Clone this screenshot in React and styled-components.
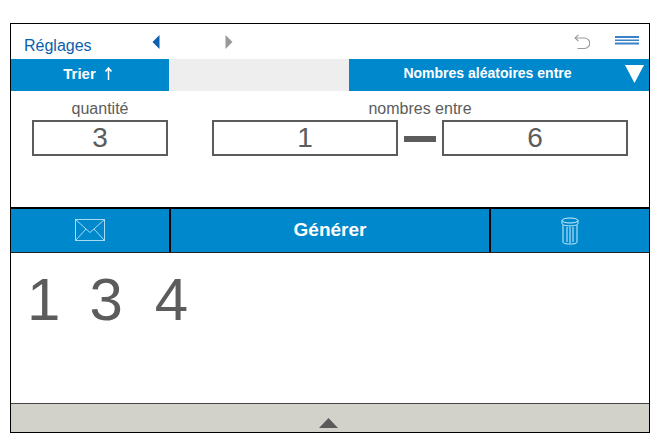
import React from "react";
import styled, { createGlobalStyle } from "styled-components";

const Global = createGlobalStyle`
  html, body { margin: 0; padding: 0; background: #fff; }
  body { font-family: "Liberation Sans", Arial, sans-serif; }
`;
const Page = styled.div`
  width: 664px; height: 443px; box-sizing: border-box; padding: 23px 14px 10px 10px;
`;
const Frame = styled.div`
  width: 640px; height: 410px; box-sizing: border-box; border: 1px solid #000;
  display: flex; flex-direction: column; background: #fff;
`;
const TopBar = styled.div`
  height: 35px; display: grid; grid-template-columns: 141px 73px 1fr 16px 59px; align-items: start;
`;
const SettingsLink = styled.div`
  color: #0a5fae; font-size: 16px; line-height: 18px; padding: 13px 0 0 13px;
`;
const IconCell = styled.div`
  padding-top: ${p => p.$top}px; line-height: 0; display: flex;
`;
const MenuIcon = styled.svg` margin-left: 25px; `;
const TabRow = styled.div`
  height: 32px; display: grid; grid-template-columns: 158px 180px 1fr;
`;
const SortTab = styled.div`
  background: #0088cc; color: #fff; font-weight: bold; font-size: 15px;
  display: flex; align-items: center; justify-content: center; gap: 8px; padding: 0 4px 3px 0;
`;
const BlankTab = styled.div` background: #eeeeee; `;
const ModeTab = styled.div`
  background: #0088cc; color: #fff; font-weight: bold; font-size: 14px; position: relative;
  display: flex; align-items: center; justify-content: center; padding: 0 23px 4px 0;
`;
const ModeArrow = styled.svg` position: absolute; right: 5px; top: 6px; `;
const FormArea = styled.div`
  height: 116px; box-sizing: border-box; padding: 9px 21px 0;
  display: grid; grid-template-columns: 136px 1fr; column-gap: 44px; align-content: start;
`;
const Field = styled.div` display: flex; flex-direction: column; `;
const FieldLabel = styled.div`
  color: #5c5c5c; font-size: 16px; line-height: 17px; text-align: center; height: 20px;
`;
const InputRow = styled.div` display: flex; align-items: center; `;
const NumberBox = styled.div`
  flex: ${p => (p.$grow ? "0 0 186px" : "1")}; height: 36px; box-sizing: border-box; border: 2px solid #5c5c5c;
  color: #5c5c5c; font-size: 28px; display: flex; align-items: center; justify-content: center;
`;
const Dash = styled.div` width: 32px; height: 6px; background: #5c5c5c; margin: 2px 6px 0; `;
const ActionBar = styled.div`
  height: 46px; box-sizing: border-box; background: #0088cc;
  border-top: 2px solid #000; border-bottom: 1px solid #222;
  display: grid; grid-template-columns: 158px 1fr 158px;
`;
const ActionCell = styled.div`
  display: flex; align-items: center; justify-content: center; color: #fff;
  font-weight: bold; font-size: 19px; padding-bottom: ${p => (p.$divided ? "2px" : "0")};
  border-left: ${p => (p.$divided ? "2px solid #000" : "none")};
  border-right: ${p => (p.$divided ? "2px solid #000" : "none")};
`;
const Results = styled.div`
  flex: 1; display: flex; gap: 32px; padding: 12px 0 0 16px; color: #5c5c5c;
  font-size: 60px; line-height: 70px;
  span:first-child { margin-right: -3px; }
`;
const Drawer = styled.div`
  height: 29px; box-sizing: border-box; background: #d2d2ca; border-top: 1px solid #444;
  display: flex; justify-content: center; padding: 14px 4px 0 0;
`;

export default function App() {
  return (
    <Page>
      <Global />
      <Frame>
        <TopBar>
          <SettingsLink>Réglages</SettingsLink>
          <IconCell $top={11}>
            <svg width="8" height="14" viewBox="0 0 8 14"><path d="M7.5 0v14L0.5 7z" fill="#0a5fae" /></svg>
          </IconCell>
          <IconCell $top={11}>
            <svg width="8" height="14" viewBox="0 0 8 14"><path d="M0.5 0v14L7.5 7z" fill="#999" /></svg>
          </IconCell>
          <IconCell $top={10}>
            <svg width="16" height="16" viewBox="0 0 16 16" fill="none" stroke="#999" strokeWidth="1.1">
              <path d="M1 4h9.5a4.3 4.3 0 0 1 0 10.5H3.5" />
              <path d="M4.5 0.8L1 4l3.5 3" />
            </svg>
          </IconCell>
          <IconCell $top={12}>
            <MenuIcon width="24" height="9" viewBox="0 0 24 9">
              <rect x="0" y="0" width="24" height="2" fill="#3a82c8" />
              <rect x="0" y="3.5" width="24" height="1.5" fill="#3a82c8" />
              <rect x="0" y="6.5" width="24" height="2" fill="#3a82c8" />
            </MenuIcon>
          </IconCell>
        </TopBar>
        <TabRow>
          <SortTab>
            <span>Trier</span>
            <svg width="9" height="13" viewBox="0 0 9 13" fill="none" stroke="#fff" strokeWidth="1.5">
              <path d="M4.5 13V1.5M1.5 4.5L4.5 1l3 3.5" />
            </svg>
          </SortTab>
          <BlankTab />
          <ModeTab>
            Nombres aléatoires entre
            <ModeArrow width="19" height="18" viewBox="0 0 19 18"><path d="M0 0h19L9.5 18z" fill="#fff" /></ModeArrow>
          </ModeTab>
        </TabRow>
        <FormArea>
          <Field>
            <FieldLabel>quantité</FieldLabel>
            <InputRow><NumberBox>3</NumberBox></InputRow>
          </Field>
          <Field>
            <FieldLabel>nombres entre</FieldLabel>
            <InputRow>
              <NumberBox $grow>1</NumberBox>
              <Dash />
              <NumberBox $grow>6</NumberBox>
            </InputRow>
          </Field>
        </FormArea>
        <ActionBar>
          <ActionCell>
            <svg width="30" height="23" viewBox="0 0 30 23" fill="none" stroke="#a8dcf5" strokeWidth="1">
              <rect x="0.5" y="0.5" width="29" height="21" />
              <path d="M0.5 0.5L15 13.5L29.5 0.5M0.5 21.5L11 10M29.5 21.5L19 10" />
            </svg>
          </ActionCell>
          <ActionCell $divided>Générer</ActionCell>
          <ActionCell>
            <svg width="18" height="28" viewBox="0 0 18 28" fill="none" stroke="#cdeefc" strokeWidth="1">
              <ellipse cx="9" cy="3.5" rx="8" ry="2.5" />
              <path d="M1 3.5v3c0 1.4 3.6 2.4 8 2.4s8-1 8-2.4v-3" />
              <path d="M2 8v17c0 1.5 3 2 7 2s7-.5 7-2V8" />
              <path d="M6 10v15M9 10v16M12 10v15" />
            </svg>
          </ActionCell>
        </ActionBar>
        <Results>
          <span>1</span><span>3</span><span>4</span>
        </Results>
        <Drawer>
          <svg width="19" height="10" viewBox="0 0 19 10"><path d="M9.5 0L19 10H0z" fill="#5a5a5a" /></svg>
        </Drawer>
      </Frame>
    </Page>
  );
}
